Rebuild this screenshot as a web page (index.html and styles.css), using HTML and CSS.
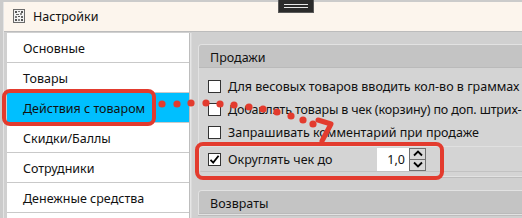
FILE: index.html
```html
<!DOCTYPE html>
<html lang="ru">
<head>
<meta charset="utf-8">
<title>Настройки</title>
<link rel="stylesheet" href="styles.css">
</head>
<body>
<div class="window">
  <div class="titlebar">
    <svg class="app-icon" width="12" height="14" viewBox="0 0 12 14">
      <rect x="0.5" y="0.5" width="11" height="13" fill="#f2f2f2" stroke="#6a6a6a"/>
      <rect x="2" y="2" width="2" height="2" fill="#555"/>
      <rect x="5" y="2" width="2" height="1" fill="#777"/>
      <rect x="8" y="2" width="2" height="2" fill="#555"/>
      <rect x="3" y="5" width="3" height="1" fill="#666"/>
      <rect x="7" y="4" width="2" height="2" fill="#888"/>
      <rect x="2" y="7" width="2" height="2" fill="#777"/>
      <rect x="5" y="7" width="2" height="1" fill="#555"/>
      <rect x="8" y="7" width="2" height="2" fill="#666"/>
      <rect x="2" y="10" width="2" height="2" fill="#555"/>
      <rect x="5" y="10" width="2" height="2" fill="#888"/>
      <rect x="8" y="10" width="2" height="2" fill="#555"/>
    </svg>
    <span class="title">Настройки</span>
  </div>
  <div class="content">
    <ul class="sidebar">
      <li class="nav-item">Основные</li>
      <li class="nav-item">Товары</li>
      <li class="nav-item selected">Действия с товаром</li>
      <li class="nav-item">Скидки/Баллы</li>
      <li class="nav-item">Сотрудники</li>
      <li class="nav-item">Денежные средства</li>
      <li class="nav-item"></li>
    </ul>
    <div class="panels">
      <section class="group">
        <div class="group-header">Продажи</div>
        <div class="group-body">
          <label class="row"><span class="checkbox"></span><span>Для весовых товаров вводить кол-во в граммах</span></label>
          <label class="row"><span class="checkbox"></span><span class="tight">Добавлять товары в чек (корзину) по доп. штрих-кодам</span></label>
          <label class="row"><span class="checkbox"></span><span>Запрашивать комментарий при продаже</span></label>
          <div class="row row-box">
            <span class="checkbox checked">
              <svg width="11" height="11" viewBox="0 0 11 11"><path d="M1.5 5.8 L4.2 8.6 L9.6 1.8" fill="none" stroke="#000" stroke-width="1.8"/></svg>
            </span>
            <span class="label-wide">Округлять чек до</span>
            <div class="spin">
              <div class="spin-input">1,0</div>
              <div class="spin-buttons">
                <div class="spin-btn"><svg width="10" height="7" viewBox="0 0 10 7"><path d="M1 5.5 L5 1.5 L9 5.5" fill="none" stroke="#000" stroke-width="1.8"/></svg></div>
                <div class="spin-btn"><svg width="10" height="7" viewBox="0 0 10 7"><path d="M1 1.5 L5 5.5 L9 1.5" fill="none" stroke="#000" stroke-width="1.8"/></svg></div>
              </div>
            </div>
          </div>
        </div>
      </section>
      <section class="group">
        <div class="group-header">Возвраты</div>
      </section>
    </div>
  </div>
</div>
<div class="handle"><span></span><span></span></div>
<svg class="annotations" width="522" height="218" viewBox="0 0 522 218">
  <rect x="4" y="91" width="150" height="33" rx="6" fill="none" stroke="#e33b2e" stroke-width="4"/>
  <rect x="197" y="144" width="245" height="34" rx="6" fill="none" stroke="#e33b2e" stroke-width="4"/>
  <g fill="#e33b2e">
    <circle cx="162" cy="104" r="3.6"/>
    <circle cx="177" cy="104" r="3.6"/>
    <circle cx="191" cy="103" r="3.6"/>
    <circle cx="206" cy="103" r="3.6"/>
    <circle cx="220" cy="104" r="3.6"/>
    <circle cx="234" cy="105" r="3.6"/>
    <circle cx="249" cy="107" r="3.6"/>
    <circle cx="263" cy="109" r="3.6"/>
    <circle cx="277" cy="112" r="3.6"/>
    <circle cx="291" cy="116" r="3.6"/>
    <circle cx="303" cy="120" r="3.6"/>
    <circle cx="313" cy="124" r="3.6"/>
  </g>
  <polyline points="318,120 331,124 322,141" fill="none" stroke="#e33b2e" stroke-width="5" stroke-linecap="round" stroke-linejoin="round"/>
</svg>
</body>
</html>
```

FILE: styles.css
```css
* { box-sizing: border-box; }
html, body { margin: 0; padding: 0; }
body {
  width: 522px;
  height: 218px;
  overflow: hidden;
  background: #cbcbcb;
  font-family: "Noto Sans", "Open Sans", sans-serif;
  font-size: 12.5px;
  color: #111;
  position: relative;
}
.window {
  margin: 2px 0 0 3px;
  background: #d0d0d0;
  height: 216px;
  border-left: 1px solid #e4e4e4;
  overflow: hidden;
}
.titlebar {
  height: 30px;
  background: #fcf5ed;
  border-bottom: 1px solid #bcbcbc;
  display: flex;
  align-items: center;
  padding-left: 9px;
}
.app-icon { display: block; margin-top: -1px; }
.title { margin-left: 8px; font-size: 12.5px; color: #111; }
.content {
  display: flex;
  padding-left: 3px;
  padding-top: 1px;
}
.sidebar {
  list-style: none;
  margin: 0;
  padding: 0;
  width: 183px;
  flex: 0 0 183px;
  background: #ffffff;
  border-right: 1px solid #bdbdbd;
  box-shadow: 1px 0 0 #e6e6e6, 2px 0 0 #dadada;
}
.nav-item {
  height: 30px;
  line-height: 27px;
  padding-top: 2px;
  padding-left: 16px;
  border-bottom: 1px solid #c9c9c9;
  white-space: nowrap;
}
.nav-item.selected { background: #00bfff; }
.panels {
  flex: 1;
  display: flex;
  flex-direction: column;
  gap: 13px;
  padding-top: 11px;
  padding-left: 8px;
  min-width: 0;
}
.group {
  border: 1px solid #e2e2e2;
  border-right: none;
  border-radius: 4px 0 0 0;
  background: #d4d4d4;
  box-shadow: 0 1px 0 #bdbdbd;
  overflow: hidden;
}
.group-header {
  height: 23px;
  line-height: 21px;
  padding-top: 2px;
  padding-left: 11px;
  background: #c4c4c4;
  border-bottom: 1px solid #bababa;
}
.group-body {
  padding: 7px 0 4px 0;
}
.row {
  display: flex;
  align-items: center;
  height: 23px;
  padding-left: 9px;
  white-space: nowrap;
}
.tight { letter-spacing: -0.15px; }
.checkbox {
  width: 13px;
  height: 13px;
  flex: 0 0 13px;
  background: #fff;
  border: 1px solid #333;
  margin-right: 7px;
  display: flex;
  align-items: center;
  justify-content: center;
}
.row-box {
  height: 26px;
  margin: 2px 0 0 0;
  padding-left: 8px;
  border: 1px solid #e0e0e0;
  border-right: none;
  border-bottom-color: #c2c2c2;
  border-radius: 3px 0 0 3px;
}
.label-wide { flex: 0 0 149px; }
.spin {
  display: flex;
  height: 23px;
}
.spin-input {
  width: 32px;
  background: #fff;
  text-align: right;
  padding-right: 4px;
  line-height: 23px;
}
.spin-buttons {
  width: 17px;
  display: flex;
  flex-direction: column;
  border: 1px solid #707070;
}
.spin-btn {
  flex: 1;
  background: #d8d8d8;
  display: flex;
  align-items: center;
  justify-content: center;
}
.spin-btn + .spin-btn { border-top: 1px solid #707070; }
.handle {
  position: absolute;
  left: 278px;
  top: 0;
  width: 36px;
  height: 13px;
  background: #2b2b2b;
  border: 1px solid #5a5a5a;
  border-top: none;
  display: flex;
  flex-direction: column;
  justify-content: center;
  align-items: center;
  gap: 2px;
}
.handle span {
  display: block;
  width: 24px;
  height: 1px;
  background: #e8e8e8;
}
.annotations {
  position: absolute;
  left: 0;
  top: 0;
  pointer-events: none;
}
```
